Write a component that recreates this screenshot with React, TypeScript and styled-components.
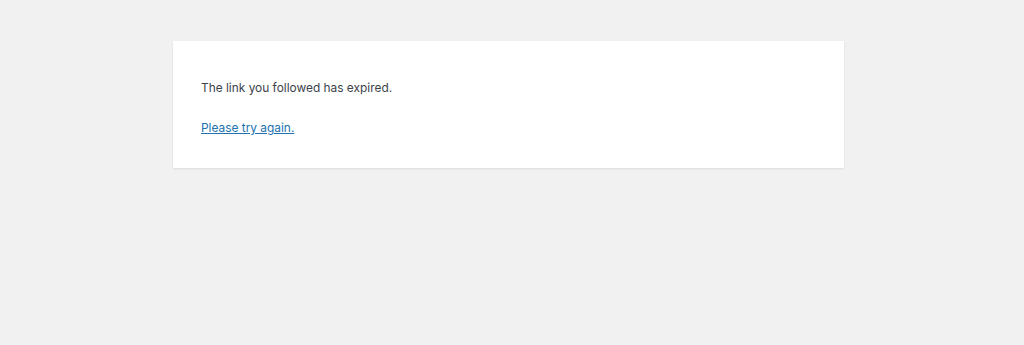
import styled, { createGlobalStyle } from 'styled-components';

const GlobalStyle = createGlobalStyle`
  html, body {
    margin: 0;
    padding: 0;
    background: #f1f1f1;
  }
  body {
    font-family: Inter, "Noto Sans", "Liberation Sans", sans-serif;
  }
`

const Page = styled.div`
  width: 100%;
  height: 345px;
  padding-top: 41px;
  box-sizing: border-box;
  display: flex;
  justify-content: center;
  align-items: flex-start;
`

const Card = styled.div`
  width: 671px;
  height: 127px;
  margin-right: 7px;
  box-sizing: border-box;
  background: #fff;
  box-shadow: 0 1px 2px rgba(0, 0, 0, 0.09);
  padding: 37px 28px 0;
  display: flex;
  flex-direction: column;
  gap: 20px;
`

const Text = styled.p`
  margin: 0;
  font-size: 11.9px;
  line-height: 20px;
  color: #3c434a;
`

const Link = styled.a`
  color: #2271b1;
  text-decoration: underline;
`

export default function App() {
  return (
    <>
      <GlobalStyle />
      <Page>
        <Card>
          <Text>The link you followed has expired.</Text>
          <Text>
            <Link href="#">Please try again.</Link>
          </Text>
        </Card>
      </Page>
    </>
  )
}
